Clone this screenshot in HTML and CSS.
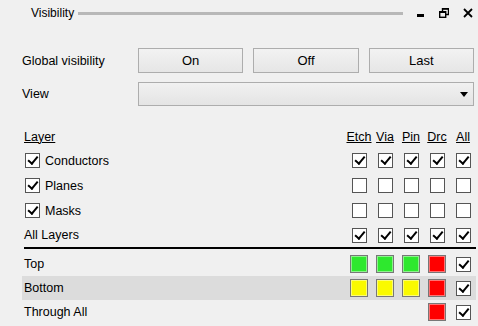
FILE: index.html
```html
<!DOCTYPE html>
<html lang="en">
<head>
<meta charset="UTF-8" />
<title>Visibility</title>
<link rel="stylesheet" href="styles.css">
</head>
<body>
<div class="panel">
  <!-- Title bar -->
  <div class="titlebar">
    <span class="title">Visibility</span>
    <span class="grip"></span>
    <span class="win-btns">
      <svg width="8" height="10" viewBox="0 0 8 10"><rect x="0" y="6" width="7" height="3" fill="#000"/></svg>
      <svg width="10" height="10" viewBox="0 0 10 10" fill="none" stroke="#000">
        <path d="M3.5 3V0.5h6v6H7" stroke-width="1.4"/>
        <rect x="0.7" y="3.7" width="6" height="5.6" stroke-width="1.4"/>
        <path d="M3 1h6.5M0.5 4.3h6.5" stroke-width="1.6"/>
      </svg>
      <svg width="10" height="10" viewBox="0 0 10 10"><path d="M1 1L9 9M9 1L1 9" stroke="#000" stroke-width="1.8"/></svg>
    </span>
  </div>

  <!-- Global controls -->
  <div class="form">
    <label>Global visibility</label>
    <button>On</button>
    <button>Off</button>
    <button>Last</button>
    <label>View</label>
    <div class="select"><span class="arrow"></span></div>
  </div>

  <!-- Layer table -->
  <div class="layers">
    <div class="row head">
      <span class="name"><u>Layer</u></span>
      <span class="col"><u>Etch</u></span>
      <span class="col"><u>Via</u></span>
      <span class="col"><u>Pin</u></span>
      <span class="col"><u>Drc</u></span>
      <span class="col"><u>All</u></span>
    </div>
    <div class="row">
      <span class="name"><span class="cb on"></span>Conductors</span>
      <span class="col"><span class="cb on"></span></span>
      <span class="col"><span class="cb on"></span></span>
      <span class="col"><span class="cb on"></span></span>
      <span class="col"><span class="cb on"></span></span>
      <span class="col"><span class="cb on"></span></span>
    </div>
    <div class="row">
      <span class="name"><span class="cb on"></span>Planes</span>
      <span class="col"><span class="cb"></span></span>
      <span class="col"><span class="cb"></span></span>
      <span class="col"><span class="cb"></span></span>
      <span class="col"><span class="cb"></span></span>
      <span class="col"><span class="cb"></span></span>
    </div>
    <div class="row">
      <span class="name"><span class="cb on"></span>Masks</span>
      <span class="col"><span class="cb"></span></span>
      <span class="col"><span class="cb"></span></span>
      <span class="col"><span class="cb"></span></span>
      <span class="col"><span class="cb"></span></span>
      <span class="col"><span class="cb"></span></span>
    </div>
    <div class="row short">
      <span class="name plain">All Layers</span>
      <span class="col"><span class="cb on"></span></span>
      <span class="col"><span class="cb on"></span></span>
      <span class="col"><span class="cb on"></span></span>
      <span class="col"><span class="cb on"></span></span>
      <span class="col"><span class="cb on"></span></span>
    </div>
    <div class="sep"></div>
    <div class="row short">
      <span class="name plain">Top</span>
      <span class="col"><span class="sw green"></span></span>
      <span class="col"><span class="sw green"></span></span>
      <span class="col"><span class="sw green"></span></span>
      <span class="col"><span class="sw red"></span></span>
      <span class="col"><span class="cb on"></span></span>
    </div>
    <div class="row short selected">
      <span class="name plain">Bottom</span>
      <span class="col"><span class="sw yellow"></span></span>
      <span class="col"><span class="sw yellow"></span></span>
      <span class="col"><span class="sw yellow"></span></span>
      <span class="col"><span class="sw red"></span></span>
      <span class="col"><span class="cb on"></span></span>
    </div>
    <div class="row short">
      <span class="name plain">Through All</span>
      <span class="col"></span>
      <span class="col"></span>
      <span class="col"></span>
      <span class="col"><span class="sw red"></span></span>
      <span class="col"><span class="cb on"></span></span>
    </div>
  </div>
</div>
</body>
</html>
```
FILE: styles.css
```css
html, body {
  margin: 0;
  background: #f0f0f0;
}
body {
  font-family: 'Liberation Sans', Arial, sans-serif;
  font-size: 12.5px;
  color: #000;
}
.panel {
  width: 478px;
  height: 326px;
  overflow: hidden;
}
/* Title bar */
.titlebar {
  display: flex;
  align-items: center;
  height: 26px;
  padding-left: 31px;
  padding-right: 5px;
}
.title {
  font-size: 12px;
}
.grip {
  flex: 1;
  height: 3px;
  background: #b8b8b8;
  margin-left: 4px;
  margin-right: 14px;
}
.win-btns {
  display: flex;
  align-items: center;
  gap: 14px;
}
.win-btns svg {
  display: block;
}
/* Global controls */
.form {
  display: grid;
  grid-template-columns: 106px 1fr 1fr 1fr;
  grid-template-rows: 25px 24px;
  column-gap: 10px;
  row-gap: 9px;
  margin: 22px 4px 0 22px;
}
.form label {
  display: flex;
  align-items: center;
}
.form button {
  font: inherit;
  font-size: 13px;
  color: #000;
  background: linear-gradient(#f2f2f2, #e6e6e6);
  border: 1px solid #adadad;
  border-radius: 0;
  padding: 0;
}
.select {
  grid-column: 2 / 5;
  position: relative;
  background: linear-gradient(#f1f1f1, #e4e4e4);
  border: 1px solid #adadad;
}
.select .arrow {
  position: absolute;
  right: 5px;
  top: 9px;
  width: 0;
  height: 0;
  border-left: 4px solid transparent;
  border-right: 4px solid transparent;
  border-top: 5px solid #000;
}
/* Layer table */
.layers {
  margin: 19px 2px 0 22px;
}
.row {
  display: grid;
  grid-template-columns: 1fr repeat(5, 26px);
  height: 25px;
  align-items: center;
}
.row.head {
  height: 23px;
}
.row.short {
  height: 24px;
}
.row.selected {
  background: #dcdcdc;
}
.name {
  display: flex;
  align-items: center;
  padding-left: 3px;
}
.name.plain {
  padding-left: 2px;
}
.head .name {
  padding-left: 2px;
}
.col {
  display: flex;
  justify-content: center;
  align-items: center;
}
.cb {
  position: relative;
  width: 13px;
  height: 13px;
  background: #fff;
  border: 1px solid #555;
}
.name .cb {
  margin-right: 5px;
}
.cb.on::after {
  content: "";
  position: absolute;
  left: 4px;
  top: 0;
  width: 3.5px;
  height: 8px;
  border-right: 2.7px solid #000;
  border-bottom: 2.7px solid #000;
  transform: rotate(40deg);
}
.sep {
  height: 2px;
  background: #000;
  margin-left: 2px;
  margin-bottom: 3px;
}
.sw {
  width: 16px;
  height: 16px;
  border: 1px solid #777;
  box-shadow: inset 0 0 0 1px rgba(255,255,255,0.45);
}
.sw.green { background: #2ee82e; }
.sw.yellow { background: #fafa00; }
.sw.red { background: #ff0000; }
```
